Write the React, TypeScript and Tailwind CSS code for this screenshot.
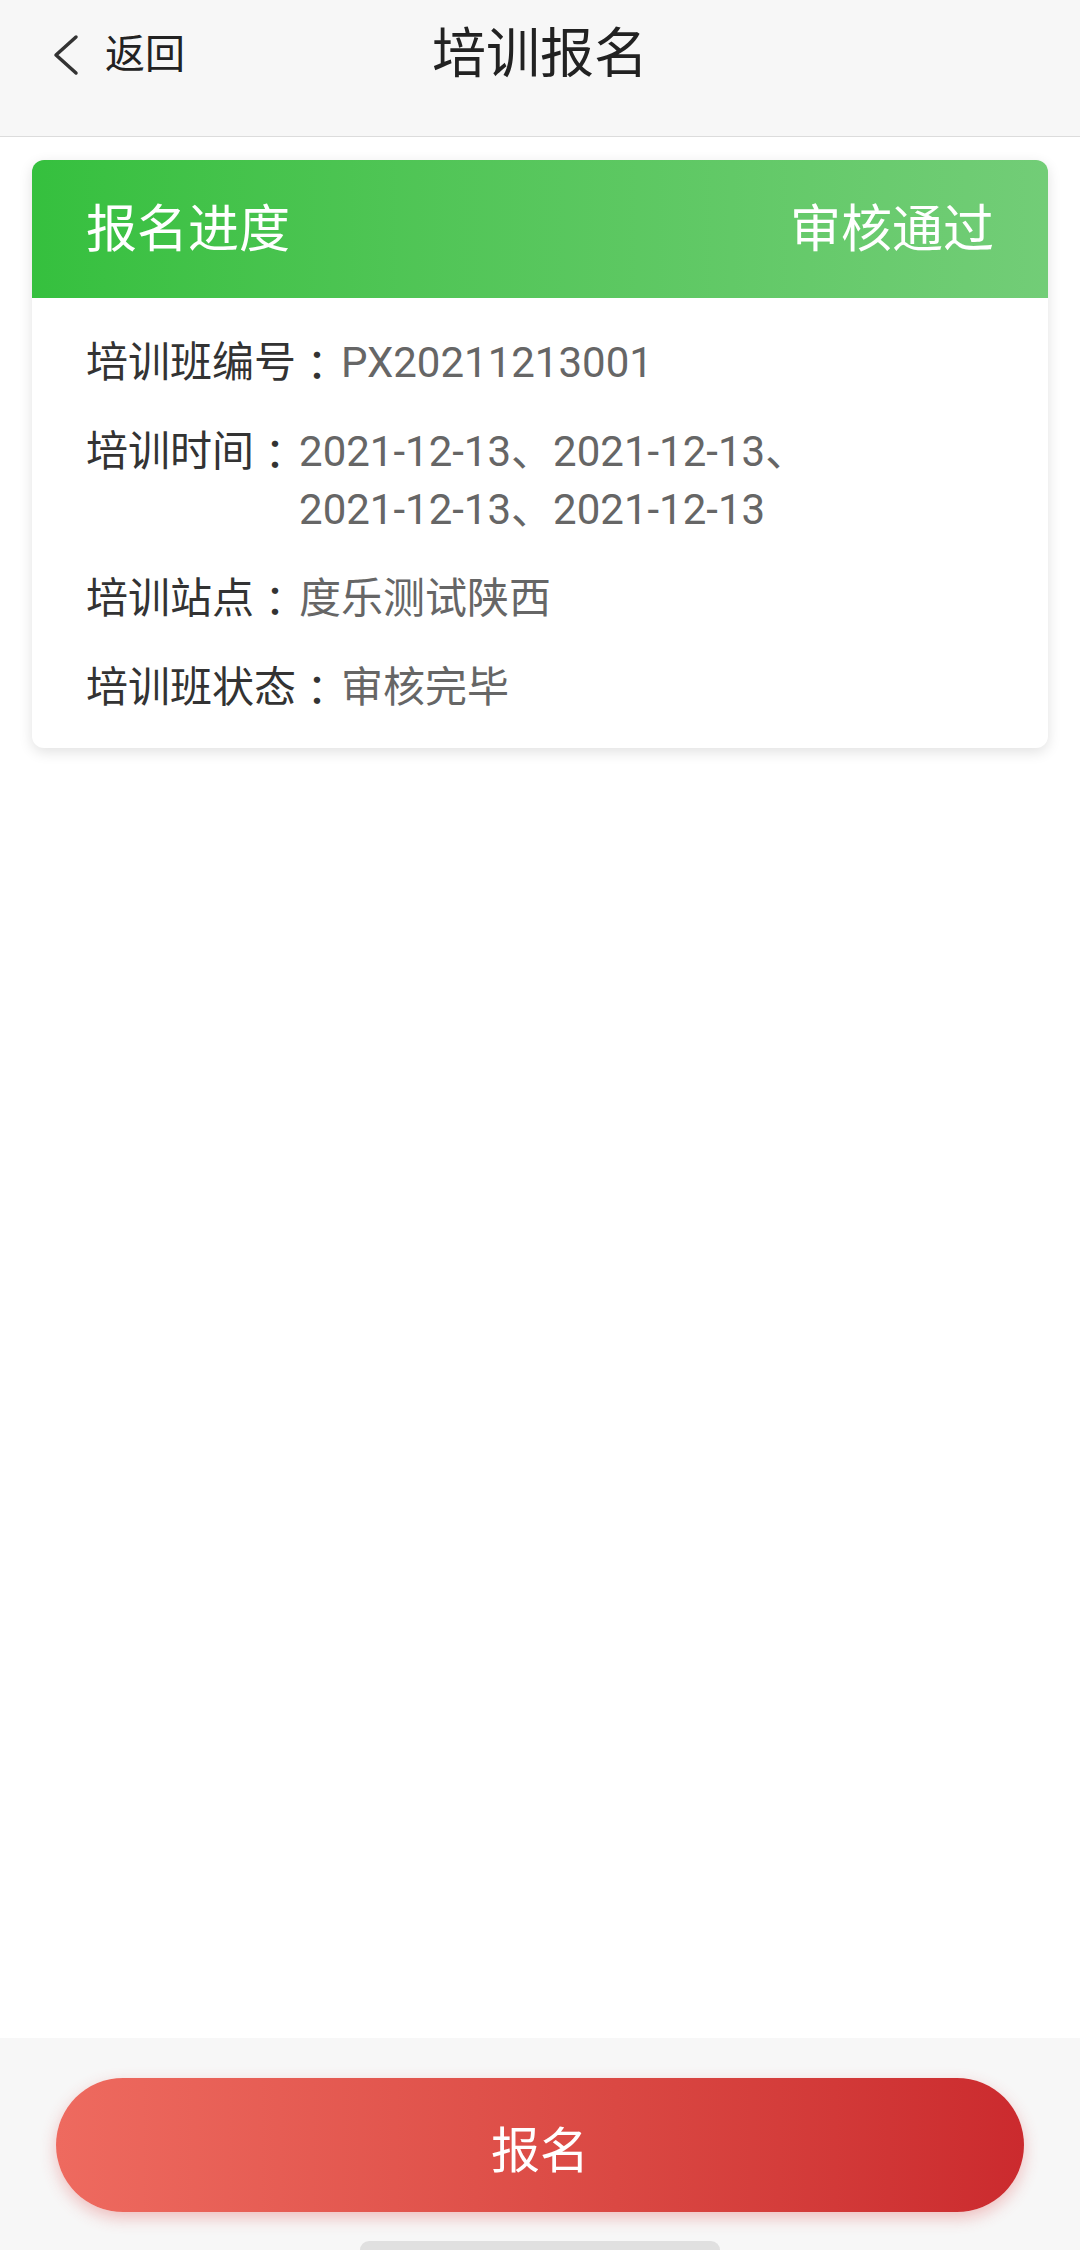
import React from 'react';

const rows: { label: string; value: string[] }[] = [
  { label: '培训班编号', value: ['PX20211213001'] },
  { label: '培训时间', value: ['2021-12-13、', '2021-12-13、', '2021-12-13、', '2021-12-13'] },
  { label: '培训站点', value: ['度乐测试陕西'] },
  { label: '培训班状态', value: ['审核完毕'] },
];

export default function App() {
  return (
    <div className="w-[1080px] h-[2250px] flex flex-col bg-white overflow-hidden font-['Roboto','Noto_Sans_CJK_SC',sans-serif]">
      {/* nav bar */}
      <div className="h-[137px] shrink-0 bg-[#f7f7f7] border-b border-[#dcdcdc]">
        <div className="h-[110px] grid grid-cols-[1fr_auto_1fr] items-center">
          <div className="flex items-center pl-[52px]">
            <svg width="27" height="42" viewBox="0 0 27 42" fill="none">
              <polyline points="24,3 4,21 24,39" stroke="#333" strokeWidth="3.5" strokeLinecap="round" strokeLinejoin="round" />
            </svg>
            <span className="ml-[26px] text-[40px] leading-none text-[#222]">返回</span>
          </div>
          <h1 className="text-[54px] leading-none text-[#222]">培训报名</h1>
          <div />
        </div>
      </div>

      {/* content */}
      <div className="flex-1 px-[32px] pt-[23px]">
        <div className="rounded-[12px] overflow-hidden bg-white shadow-[0_4px_14px_rgba(0,0,0,0.12)]">
          <div className="h-[138px] px-[54px] flex items-center justify-between bg-linear-to-r from-[#35c03e] to-[#72cd77] text-white text-[51px] leading-none">
            <span>报名进度</span>
            <span>审核通过</span>
          </div>
          <div className="px-[54px] pt-[36px] pb-[31px] flex flex-col gap-[31px]">
            {rows.map((r) => (
              <div key={r.label} className="flex text-[42px] leading-[58px]">
                <span className="shrink-0 text-[#333]">
                  {r.label}
                  <span className="inline-block h-[58px] align-top font-['Noto_Sans_CJK_JP',sans-serif]">：</span>
                </span>
                <span className="min-w-0 pl-[3px] text-[#666]">
                  {r.value.map((v, i) => (
                    <span key={i} className="whitespace-nowrap">{v}</span>
                  ))}
                </span>
              </div>
            ))}
          </div>
        </div>
      </div>

      {/* bottom bar */}
      <div className="h-[212px] shrink-0 bg-[#f7f7f7] flex flex-col items-center pt-[40px]">
        <button className="w-[968px] h-[134px] shrink-0 pt-[12px] rounded-full bg-linear-to-r from-[#ee6a5f] to-[#cb2a2e] shadow-[0_6px_16px_rgba(220,60,60,0.3)] text-white text-[49px] leading-none">
          报名
        </button>
        <div className="mt-[29px] w-[360px] h-[18px] shrink-0 rounded-full bg-[#e0e0e0]" />
      </div>
    </div>
  );
}
